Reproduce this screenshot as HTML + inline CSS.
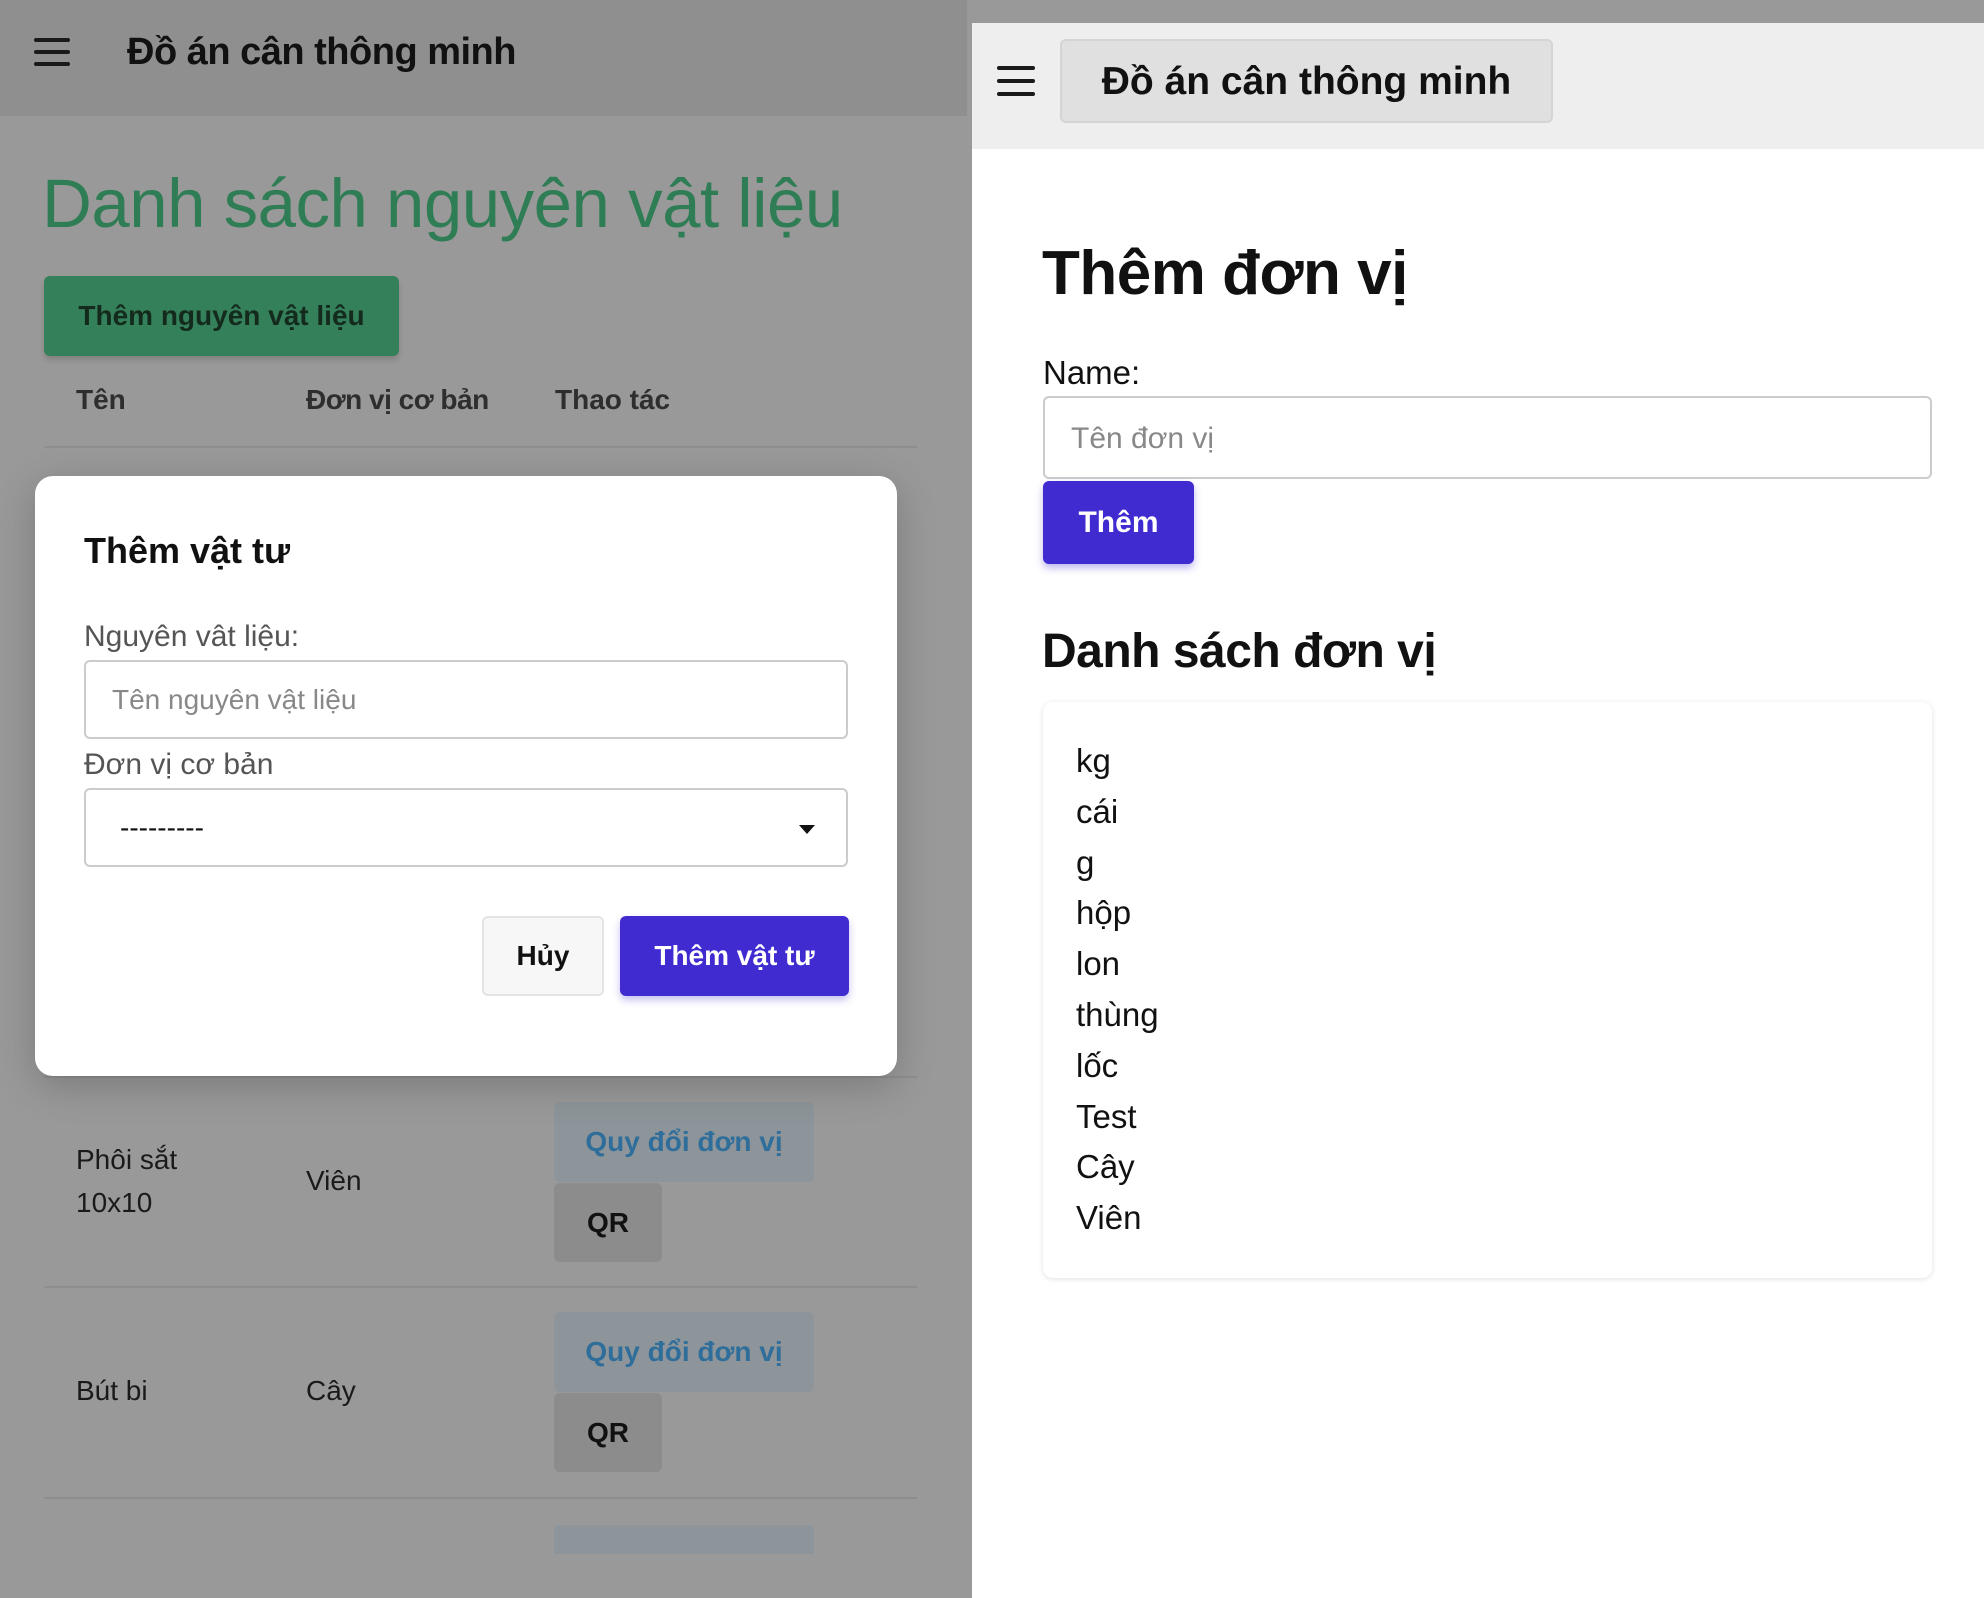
<!DOCTYPE html>
<html><head><meta charset="utf-8"><style>
*{box-sizing:border-box;margin:0;padding:0}
body{width:1984px;height:1598px;position:relative;overflow:hidden;font-family:"Liberation Sans",sans-serif;background:#fff}
.a{position:absolute;white-space:nowrap}
.ham span{position:absolute;left:0;height:4px;background:#1a1a1a;border-radius:2px}
</style></head><body>
<div class="a" style="left:0;top:0;width:972px;height:1598px;background:#999"></div>
<div class="a" style="left:0;top:0;width:967px;height:116px;background:#8f8f8f"></div>
<div class="a ham" style="left:34px;top:38px;width:36px;height:30px">
<span style="top:0;width:36px"></span><span style="top:12px;width:36px"></span><span style="top:24px;width:36px"></span></div>
<div class="a" style="left:127px;top:31px;font-size:38px;font-weight:bold;color:#111;letter-spacing:-0.5px">Đồ án cân thông minh</div>
<div class="a" style="left:42px;top:164px;font-size:69px;color:#2f7d55;letter-spacing:-0.5px">Danh sách nguyên vật liệu</div>
<div class="a" style="left:44px;top:276px;width:355px;height:80px;background:#33805a;border-radius:6px;box-shadow:0 4px 6px rgba(0,0,0,.15);font-size:28px;font-weight:bold;color:#142a1d;line-height:80px;text-align:center">Thêm nguyên vật liệu</div>
<div class="a" style="left:76px;top:384px;font-size:28px;font-weight:bold;color:#2e2e2e">Tên</div>
<div class="a" style="left:306px;top:384px;font-size:28px;font-weight:bold;color:#2e2e2e;letter-spacing:-0.5px">Đơn vị cơ bản</div>
<div class="a" style="left:555px;top:384px;font-size:28px;font-weight:bold;color:#2e2e2e">Thao tác</div>
<div class="a" style="left:44px;top:446px;width:873px;height:2px;background:#8e8e8e"></div>
<div class="a" style="left:44px;top:1076px;width:873px;height:2px;background:#8e8e8e"></div>
<div class="a" style="left:44px;top:1286px;width:873px;height:2px;background:#8e8e8e"></div>
<div class="a" style="left:44px;top:1497px;width:873px;height:2px;background:#8e8e8e"></div>
<div class="a" style="left:76px;top:1138px;font-size:28px;color:#1a1a1a;line-height:43px">Phôi sắt<br>10x10</div>
<div class="a" style="left:306px;top:1165px;font-size:28px;color:#1a1a1a">Viên</div>
<div class="a" style="left:554px;top:1102px;width:260px;height:80px;background:#8d959a;border-radius:6px;font-size:28px;font-weight:bold;color:#2f6e9a;line-height:80px;text-align:center">Quy đổi đơn vị</div>
<div class="a" style="left:554px;top:1183px;width:108px;height:79px;background:#8c8c8c;border-radius:6px;font-size:28px;font-weight:bold;color:#111;line-height:79px;text-align:center">QR</div>
<div class="a" style="left:76px;top:1375px;font-size:28px;color:#1a1a1a">Bút bi</div>
<div class="a" style="left:306px;top:1375px;font-size:28px;color:#1a1a1a">Cây</div>
<div class="a" style="left:554px;top:1312px;width:260px;height:80px;background:#8d959a;border-radius:6px;font-size:28px;font-weight:bold;color:#2f6e9a;line-height:80px;text-align:center">Quy đổi đơn vị</div>
<div class="a" style="left:554px;top:1393px;width:108px;height:79px;background:#8c8c8c;border-radius:6px;font-size:28px;font-weight:bold;color:#111;line-height:79px;text-align:center">QR</div>
<div class="a" style="left:554px;top:1525px;width:260px;height:29px;background:#8d959a;border-radius:6px 6px 0 0"></div>
<div class="a" style="left:35px;top:476px;width:862px;height:600px;background:#fff;border-radius:18px;box-shadow:0 10px 40px rgba(0,0,0,.2)"></div>
<div class="a" style="left:84px;top:530px;font-size:36px;font-weight:bold;color:#111">Thêm vật tư</div>
<div class="a" style="left:84px;top:620px;font-size:30px;color:#555">Nguyên vât liệu:</div>
<div class="a" style="left:84px;top:660px;width:764px;height:79px;border:2px solid #ccc;border-radius:6px;font-size:28px;color:#888;line-height:75px;padding-left:26px">Tên nguyên vật liệu</div>
<div class="a" style="left:84px;top:748px;font-size:30px;color:#555">Đơn vị cơ bản</div>
<div class="a" style="left:84px;top:788px;width:764px;height:79px;border:2px solid #ccc;border-radius:6px;font-size:28px;color:#111;line-height:75px;padding-left:34px">---------</div>
<div class="a" style="left:799px;top:825px;width:0;height:0;border-left:8px solid transparent;border-right:8px solid transparent;border-top:9px solid #111"></div>
<div class="a" style="left:482px;top:916px;width:122px;height:80px;background:#f7f7f7;border:2px solid #e4e4e4;border-radius:6px;font-size:28px;font-weight:bold;color:#111;line-height:76px;text-align:center">Hủy</div>
<div class="a" style="left:620px;top:916px;width:229px;height:80px;background:#3f2bd0;border-radius:6px;box-shadow:0 4px 8px rgba(63,43,208,.3);font-size:28px;font-weight:bold;color:#fff;line-height:80px;text-align:center">Thêm vật tư</div>
<div class="a" style="left:972px;top:0;width:1012px;height:23px;background:#999"></div>
<div class="a" style="left:972px;top:23px;width:1012px;height:126px;background:#eee"></div>
<div class="a ham" style="left:997px;top:66px;width:38px;height:30px">
<span style="top:0;width:38px"></span><span style="top:13px;width:38px"></span><span style="top:26px;width:38px"></span></div>
<div class="a" style="left:1060px;top:39px;width:493px;height:84px;background:#e0e0e0;border:2px solid #d4d4d4;border-radius:6px;font-size:39px;font-weight:bold;color:#111;line-height:82px;text-align:center">Đồ án cân thông minh</div>
<div class="a" style="left:1042px;top:238px;font-size:62px;font-weight:bold;color:#111;letter-spacing:-0.5px">Thêm đơn vị</div>
<div class="a" style="left:1043px;top:354px;font-size:33px;color:#111">Name:</div>
<div class="a" style="left:1043px;top:396px;width:889px;height:83px;border:2px solid #ccc;border-radius:6px;font-size:30px;color:#888;line-height:81px;padding-left:26px">Tên đơn vị</div>
<div class="a" style="left:1043px;top:481px;width:151px;height:83px;background:#3f2bd0;border-radius:6px;box-shadow:0 4px 8px rgba(63,43,208,.35);font-size:30px;font-weight:bold;color:#fff;line-height:83px;text-align:center">Thêm</div>
<div class="a" style="left:1042px;top:624px;font-size:48px;font-weight:bold;color:#111;letter-spacing:-0.5px">Danh sách đơn vị</div>
<div class="a" style="left:1043px;top:702px;width:889px;height:576px;background:#fff;border-radius:10px;box-shadow:0 1px 6px rgba(0,0,0,.12)"></div>
<div class="a" style="left:1076px;top:736px;font-size:33px;color:#111;line-height:50.8px">kg<br>cái<br>g<br>hộp<br>lon<br>thùng<br>lốc<br>Test<br>Cây<br>Viên</div>
</body></html>
